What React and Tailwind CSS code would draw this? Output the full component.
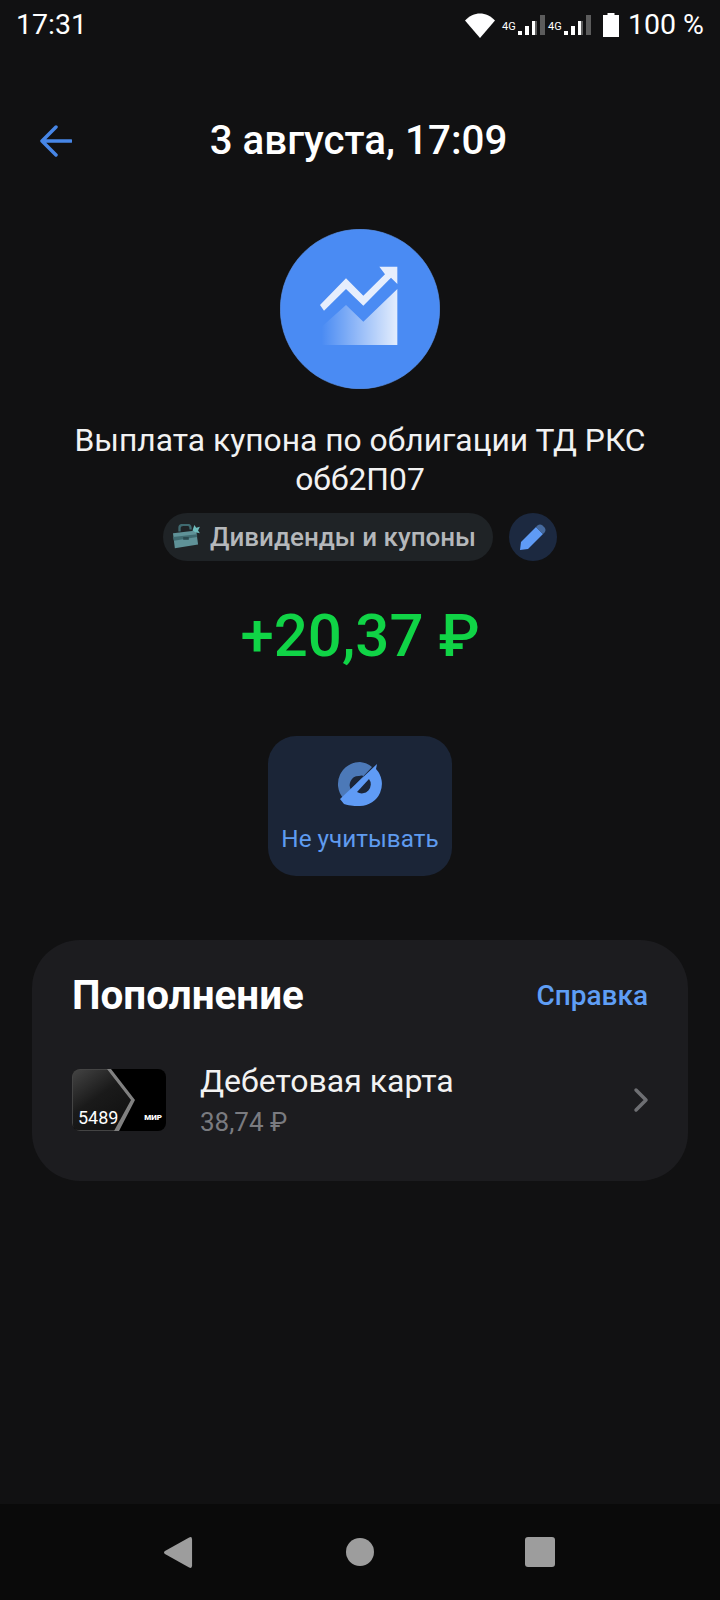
const Wifi = () => (
  <svg width="30" height="25" viewBox="0 0 30 25">
    <path d="M0 7.5 C8.500 -2 21.500 -2 30 7.500 L15 25 Z" fill="#fff" />
  </svg>
)

const Signal = () => (
  <div className="flex items-center">
    <span className="text-[11px] leading-none text-white w-[16px] self-start mt-[6px]">4G</span>
    <svg width="28" height="20" viewBox="0 0 28 20">
      <rect x="0" y="16" width="4" height="4" fill="#fff" />
      <rect x="7" y="11" width="4" height="9" fill="#fff" />
      <rect x="14" y="6" width="5" height="14" fill="#5c5c5c" />
      <rect x="14" y="6" width="3" height="14" fill="#fff" />
      <rect x="22" y="0" width="5" height="20" fill="#5c5c5c" />
    </svg>
  </div>
)

const Battery = () => (
  <svg width="16" height="24" viewBox="0 0 16 24">
    <path d="M4.500 0 H11.500 V2 H16 V24 H0 V2 H4.500 Z" fill="#fff" />
  </svg>
)

const StatusBar = () => (
  <div className="flex items-center justify-between h-[50px] pl-4 pr-4 text-white text-[28.5px] leading-none">
    <span>17:31</span>
    <div className="flex items-center">
      <Wifi />
      <div className="flex items-center ml-[7px] gap-[2px]">
        <Signal />
        <Signal />
      </div>
      <div className="ml-[11px]"><Battery /></div>
      <span className="ml-[9px]">100 %</span>
    </div>
  </div>
)

const ChartIcon = () => (
  <svg width="160" height="160" viewBox="60 42 480 480" className="block">
    <defs>
      <linearGradient id="area" x1="185" x2="412" y1="0" y2="0" gradientUnits="userSpaceOnUse">
        <stop offset="0" stopColor="#fff" stopOpacity="0" />
        <stop offset="1" stopColor="#fff" stopOpacity="0.85" />
      </linearGradient>
    </defs>
    <circle cx="300" cy="282" r="239" fill="#4a8bf3" stroke="#5c97f4" strokeWidth="2" />
    <path d="M185 390 V335 L258 270 L310 320 L412 222 V390 Z" fill="url(#area)" />
    <path d="M180 270 L258 190 L310 242 L375 178 L358 155 H412 V207 L393 188 L310 272 L258 222 L192 287 Z" fill="#e6eefd" />
  </svg>
)

const Tag = () => (
  <div className="flex items-center justify-center gap-4 mt-[14px]">
    <div className="flex items-center h-12 w-[330px] pl-[9px] rounded-full bg-[#1f2326]">
      <svg width="28" height="26" viewBox="0 0 30 28">
        <path d="M8 8 V4 C8 2 10 1 12 1 H17 C19 1 20 3 20 6" fill="none" stroke="#3f6a70" strokeWidth="2.500" />
        <path d="M1 10 L26 7 L28 22 L3 26 Z" fill="#5f9298" />
        <path d="M1 14 L27 11 L27 14 L2 18 Z" fill="#3f6a70" />
        <rect x="12" y="14" width="6" height="3" fill="#2b4a50" />
        <path d="M24 1 L26 4 L30 3 L28 7 L30 10 L25 9 L22 7 Z" fill="#6fbcbc" />
      </svg>
      <span className="ml-[10px] text-[26px] leading-none font-medium text-[#b5b8bb]">Дивиденды и купоны</span>
    </div>
    <div className="flex items-center justify-center size-12 rounded-full bg-[#1c2940]">
      <svg width="26" height="26" viewBox="0 0 26 26">
        <path d="M0 26 L1 18 L16 3 L23 10 L8 25 Z" fill="#5f9bf5" />
        <path d="M17.500 1.500 Q20 -0.500 22.500 1.500 L24.500 3.500 Q26.500 6 24.500 8.500 L23 10 L16 3 Z" fill="#466a9e" />
      </svg>
    </div>
  </div>
)

const Exclude = () => (
  <svg width="46" height="46" viewBox="0 0 46 46">
    <path d="M23 1 A22 22 0 0 0 6 37 L35 6 A22 22 0 0 0 23 1 Z M22 15 A8 8 0 0 1 27 15 L15 30 A9 9 0 0 1 22 15 Z" fill="#4c79b8" fillRule="evenodd" />
    <path d="M40 3 L3 38 L7 43 C14 45 18 45 23 45 A22 22 0 0 0 39 8 Z M32 18 A9 9 0 0 1 20 31 Z" fill="#5f9bf5" fillRule="evenodd" />
  </svg>
)

const CardThumb = () => (
  <div className="relative w-[94px] h-[62px] mb-[4px] rounded-lg overflow-hidden bg-black">
    <svg width="64" height="62" viewBox="0 0 64 62" className="absolute left-0 top-0">
      <defs>
        <linearGradient id="thumb" x1="0" x2="0.700" y1="0" y2="1">
          <stop offset="0" stopColor="#444" />
          <stop offset="0.500" stopColor="#1a1a1a" />
          <stop offset="1" stopColor="#111" />
        </linearGradient>
      </defs>
      <path d="M0.500 6 Q0.500 0.500 6 0.500 H36 L60 31 L44 61.500 H6 Q0.500 61.500 0.500 56 Z" fill="url(#thumb)" stroke="#444" />
      <path d="M35 0 H39 L63 31 L47 62 H42 L59 31 Z" fill="#808080" />
    </svg>
    <span className="absolute left-[6px] bottom-[1px] text-[18px] leading-[24px] text-white">5489</span>
    <span className="absolute right-[4px] bottom-[9px] text-[8px] leading-[8px] font-black text-white">МИР</span>
  </div>
)

const NavBar = () => (
  <div className="flex items-center justify-center gap-[152px] h-[96px] pr-[2px] bg-[#0a0a0a] text-[#9d9d9d]">
    <svg width="29" height="33" viewBox="0 0 30 33" fill="currentColor">
      <path d="M1 15 L26 1 Q29 -0.500 29 3 V30 Q29 33.500 26 32 L1 18 Q-1 16.500 1 15 Z" />
    </svg>
    <div className="size-[28px] ml-[1px] mr-[-1px] rounded-full bg-[#9d9d9d]" />
    <div className="size-[30px] rounded-[3px] bg-[#9d9d9d]" />
  </div>
)

export default function App() {
  return (
    <div className="flex flex-col h-[1600px] w-[720px] bg-[#111112] font-['Roboto',sans-serif]">
      <StatusBar />
      <div className="flex items-center h-[48px] mt-[67px] px-10">
        <svg width="32" height="32" viewBox="0 0 32 32" fill="none" stroke="#4786e6" strokeWidth="3.500" strokeLinecap="round" strokeLinejoin="round">
          <path d="M31 16 H3 M16 2 L2 16 L16 30" />
        </svg>
        <div className="flex-1 text-center text-[40.300px] leading-[48px] font-medium text-white">3 августа, 17:09</div>
        <div className="w-[35px]" />
      </div>
      <div className="flex justify-center mt-[64px]">
        <ChartIcon />
      </div>
      <div className="mt-[32px] px-[60px] text-center text-[31.800px] leading-[39px] text-[#f2f2f2]">
        Выплата купона по облигации ТД РКС обб2П07
      </div>
      <Tag />
      <div className="mt-[39px] text-center text-[60px] leading-[72px] font-medium text-[#10d446]">+20,37 ₽</div>
      <div className="flex justify-center mt-[64px]">
        <div className="flex flex-col items-center w-[184px] h-[140px] pt-[25px] rounded-[28px] bg-[#1b2537]">
          <Exclude />
          <span className="mt-[17px] text-[24.300px] leading-[30px] text-[#5f9bef]">Не учитывать</span>
        </div>
      </div>
      <div className="mt-[64px] mx-8 h-[241px] rounded-[48px] bg-[#1c1c1f] pl-[40px] pr-[40px] pt-[32px]">
        <div className="flex items-center justify-between h-[48px]">
          <span className="text-[40.400px] leading-[48px] font-bold text-white">Пополнение</span>
          <span className="text-[28px] leading-[36px] font-medium text-[#5f9ef5]">Справка</span>
        </div>
        <div className="flex items-center mt-[41px]">
          <CardThumb />
          <div className="flex flex-col ml-[34px] flex-1">
            <span className="text-[32px] leading-[40px] text-[#f2f2f2]">Дебетовая карта</span>
            <span className="text-[26px] leading-[42px] text-[#7a7b80]">38,74 ₽</span>
          </div>
          <svg width="16" height="26" viewBox="0 0 16 26" fill="none" stroke="#6e6f73" strokeWidth="3.500" strokeLinecap="round" strokeLinejoin="round" className="mr-[-1px] mb-[4px]">
            <path d="M3 3 L13 13 L3 23" />
          </svg>
        </div>
      </div>
      <div className="flex-1" />
      <NavBar />
    </div>
  )
}
